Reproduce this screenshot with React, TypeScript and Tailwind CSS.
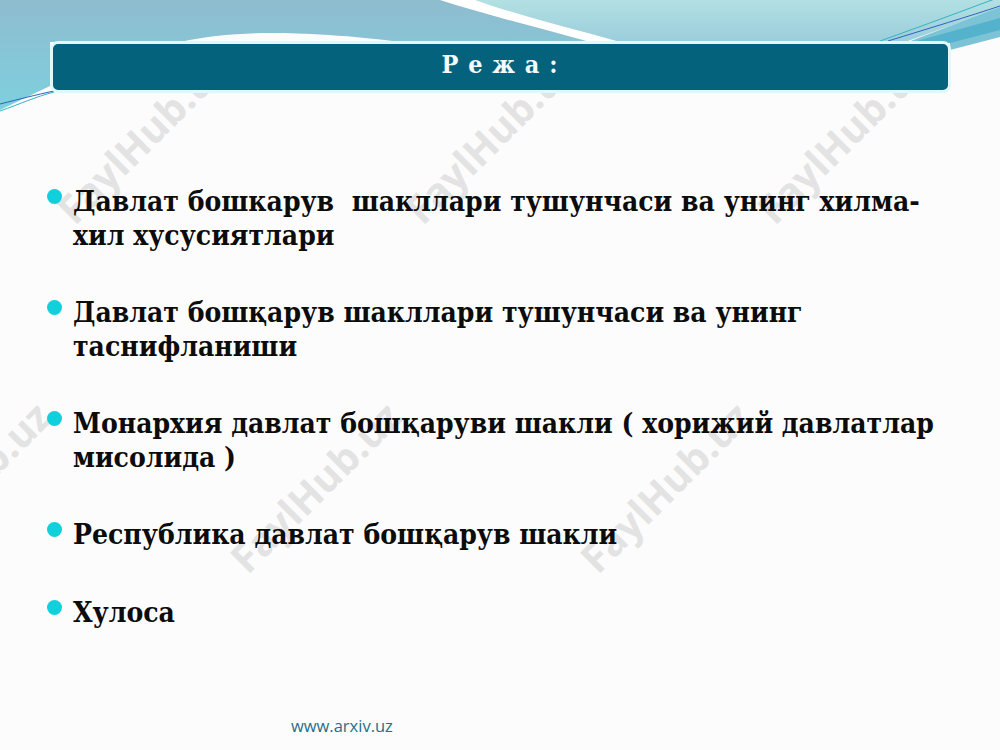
const items = [
  'Давлат бошкарув  шакллари тушунчаси ва унинг хилма-хил хусусиятлари',
  'Давлат бошқарув шакллари тушунчаси ва унинг таснифланиши',
  'Монархия давлат бошқаруви шакли ( хорижий давлатлар мисолида )',
  'Республика давлат бошқарув шакли',
  'Хулоса',
];

// watermark centres, read off the reference
const marks = [
  [142, 138],
  [490, 138],
  [842, 138],
  [-35, 487],
  [315, 487],
  [665, 487],
];

function HeaderArt() {
  return (
    <svg className="absolute left-0 top-0" width="1000" height="120" viewBox="0 0 1000 120">
      <defs>
        <linearGradient id="left" x1="0" y1="0" x2="0" y2="1">
          <stop offset="0" stopColor="#8fbccf" />
          <stop offset="1" stopColor="#7dd0de" />
        </linearGradient>
        <linearGradient id="right" x1="0" y1="0" x2="0" y2="1">
          <stop offset="0" stopColor="#b2e0e3" />
          <stop offset="1" stopColor="#9bcddb" />
        </linearGradient>
      </defs>
      <path d="M0 0H470C530 25 575 35 620 42H400C340 34 290 33 270 33C240 33 205 36 180 42H50V86L0 110Z" fill="url(#left)" />
      <path d="M470 0H1000V8L905 42H620C575 35 530 25 470 0Z" fill="url(#right)" />
      <path d="M440 0H475C520 16 570 28 620 42H590C540 28 490 16 440 0Z" fill="#ffffff" />
      <path d="M908 42L1000 7V37L950 50V42Z" fill="#7cc3d6" />
      <path d="M913 42L1000 18V30L950 43Z" fill="#54b2cc" />
      <path d="M880 41C925 25 965 10 1000 -3" fill="none" stroke="#2fb6c0" strokeWidth="1" />
      <path d="M888 41C930 28 970 16 1000 6" fill="none" stroke="#2e62c4" strokeWidth="1" />
      <path d="M0 104C20 99 35 95 54 91" fill="none" stroke="#2e62c4" strokeWidth="1" />
      <path d="M0 111C20 104 35 97 54 92" fill="none" stroke="#2fb6c0" strokeWidth="1" />
    </svg>
  );
}

export default function App() {
  return (
    <div className="relative h-[750px] w-[1000px] overflow-hidden bg-[#fcfcfc] font-['DejaVu_Serif_Condensed','Liberation_Serif',serif]">
      <HeaderArt />
      {marks.map(([x, y], i) => (
        <div
          key={i}
          className="absolute -translate-x-1/2 -translate-y-1/2 -rotate-45 whitespace-nowrap font-['Open_Sans',sans-serif] text-[40px] font-bold text-[#e3e3e3]"
          style={{ left: x, top: y }}
        >
          FaylHub.uz
        </div>
      ))}

      <div className="relative flex h-full flex-col">
        <div className="mx-[49.5px] mt-[40.5px] flex h-[52px] items-center justify-center rounded-[8px] border-[3px] border-[#e2f7fa] bg-[#05627c] pb-1">
          <span className="text-[25px] font-bold tracking-[1px] text-[#f4fbfc]">Р е ж а :</span>
        </div>

        <ul className="mt-[92.5px] flex flex-col pl-[47px] pr-[60px] text-[28px] font-bold leading-[33.5px] text-[#0c0c0c]">
          {items.map((t, i) => (
            <li key={i} className="mb-[44px] flex gap-[11px]">
              <span className="mt-[4px] h-[15px] w-[15px] shrink-0 rounded-full bg-[#12cfdc]" />
              <span className="whitespace-pre-wrap">{t}</span>
            </li>
          ))}
        </ul>

        <div className="absolute left-[291px] top-[714px] font-['Open_Sans',sans-serif] text-[16.5px] text-[#1f6f8a]">www.arxiv.uz</div>
      </div>
    </div>
  );
}
